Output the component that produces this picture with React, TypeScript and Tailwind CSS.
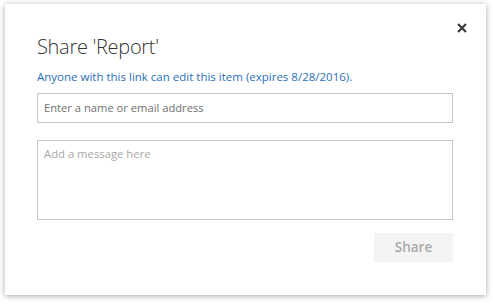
export default function App() {
  return (
    <div className="w-[493px] h-[305px] bg-white pt-[4px] pl-[5px]" style={{ fontFamily: '"Open Sans", "Noto Sans", sans-serif' }}>
      <div className="relative w-[481px] h-[291px] bg-white shadow-[0_1px_6px_rgba(0,0,0,0.35)] pl-[32px] pr-[33px]">
        <button className="absolute left-[447px] top-[14px] w-[20px] h-[20px] flex items-center justify-center">
          <svg width="10" height="10" viewBox="0 0 10 10">
            <path d="M1 1 L9 9 M9 1 L1 9" stroke="#3a3a3a" strokeWidth="2.2" strokeLinecap="butt" />
          </svg>
        </button>
        <div className="pt-[28px] text-[20px] leading-[30px] font-light tracking-[-0.3px] text-[#333333]">Share 'Report'</div>
        <div className="mt-[7px] text-[11.5px] leading-[16px] text-[#2b6fb8]">
          Anyone with this link can edit this item (expires 8/28/2016).
        </div>
        <div className="mt-[8px] h-[30px] border border-[#c6c6c6] flex items-center px-[6px] text-[11.2px] text-[#707070]">
          Enter a name or email address
        </div>
        <div className="mt-[17px] h-[80px] border border-[#c6c6c6] px-[6px] pt-[5px] text-[11.3px] text-[#a8a8a8]">
          Add a message here
        </div>
        <div className="mt-[13px] flex justify-end">
          <div className="w-[79px] h-[29px] bg-[#f4f4f4] flex items-center justify-center text-[13.5px] font-semibold text-[#a9a9a9]">
            Share
          </div>
        </div>
      </div>
    </div>
  );
}
